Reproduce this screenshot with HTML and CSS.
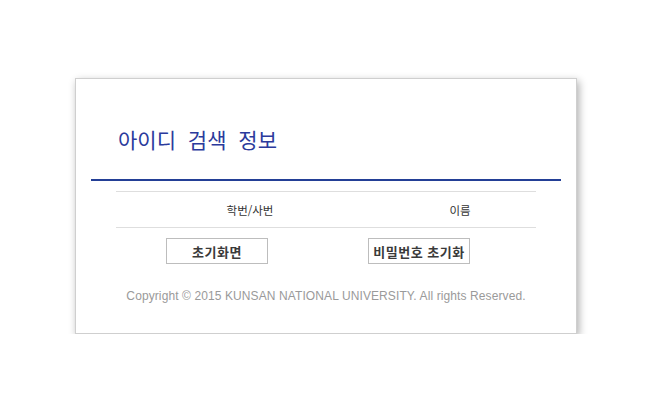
FILE: index.html
```html
<!DOCTYPE html>
<html lang="ko">
<head>
<meta charset="utf-8">
<title>아이디 검색 정보</title>
<link rel="stylesheet" href="styles.css">
</head>
<body>
<div class="box">
  <h1 class="title">아이디 검색 정보</h1>
  <div class="result">
    <div class="row">
      <div class="cell cell-id">학번/사번</div>
      <div class="cell cell-name">이름</div>
    </div>
  </div>
  <div class="buttons">
    <button class="btn btn-home">초기화면</button>
    <button class="btn btn-reset">비밀번호 초기화</button>
  </div>
  <p class="copyright">Copyright &copy; 2015 KUNSAN NATIONAL UNIVERSITY. All rights Reserved.</p>
</div>
</body>
</html>
```
FILE: styles.css
```css
html, body {
  margin: 0;
  padding: 0;
  background: #fff;
}
body {
  font-family: "Noto Sans CJK KR", "Liberation Sans", sans-serif;
  padding: 78px 0 0 75px;
}
.box {
  width: 470px;
  height: 254px;
  padding: 0 15px;
  background: #fff;
  border: 1px solid #cfcfcf;
  box-shadow: 2px 3px 8px rgba(0, 0, 0, 0.32);
}
.title {
  margin: 0;
  padding: 45px 0 0 27px;
  height: 55px;
  font-size: 21px;
  line-height: 30px;
  font-weight: normal;
  color: #2b3a9c;
  word-spacing: 6px;
  border-bottom: 2px solid #233f96;
}
.result {
  margin: 10px 25px 0;
  border-top: 1px solid #dedede;
  border-bottom: 1px solid #dedede;
}
.row {
  display: flex;
  height: 35px;
  align-items: center;
  font-size: 11.5px;
  color: #333;
}
.cell {
  text-align: center;
}
.cell-id {
  width: 268px;
}
.cell-name {
  width: 152px;
}
.buttons {
  display: flex;
  margin-top: 10px;
  padding-left: 75px;
  gap: 100px;
}
.btn {
  width: 102px;
  height: 26px;
  padding: 0;
  margin: 0;
  background: #fff;
  border: 1px solid #bdbdbd;
  font-family: "Noto Sans CJK KR", sans-serif;
  font-size: 13px;
  font-weight: bold;
  color: #3a3a3a;
  white-space: nowrap;
  letter-spacing: 0.5px;
}
.copyright {
  margin: 25px 0 0;
  text-align: center;
  font-family: "Liberation Sans", Arial, sans-serif;
  font-size: 12px;
  letter-spacing: 0.1px;
  color: #9a9a9a;
}
```
